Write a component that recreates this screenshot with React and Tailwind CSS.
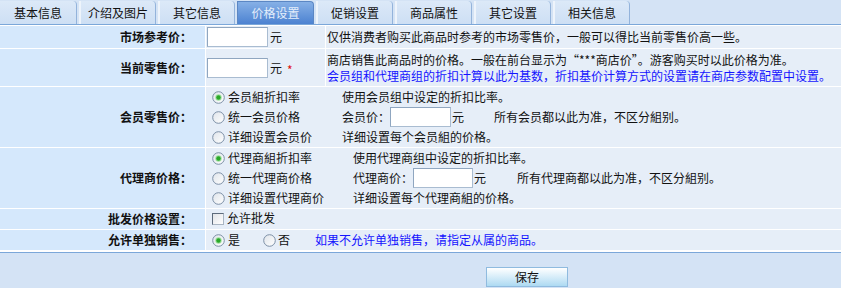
import React, { useState } from "react";

const tabs = ["基本信息", "介绍及图片", "其它信息", "价格设置", "促销设置", "商品属性", "其它设置", "相关信息"];

function Radio({ checked }) {
    return (
        <svg width="13" height="13" viewBox="0 0 13 13" className="shrink-0">
            <defs>
                <linearGradient id="rg" x1="0" y1="0" x2="1" y2="1">
                    <stop offset="0" stopColor="#dfe4ea" />
                    <stop offset="1" stopColor="#ffffff" />
                </linearGradient>
            </defs>
            <circle cx="6.5" cy="6.5" r="5.8" fill="url(#rg)" stroke="#7c8fa6" strokeWidth="1" />
            {checked && <circle cx="6.5" cy="6.5" r="3.2" fill="#9fe09f" />}
            {checked && <circle cx="6.5" cy="6.5" r="2.2" fill="#2aa82a" />}
        </svg>
    );
}

function Checkbox() {
    return (
        <div className="w-[12px] h-[12px] shrink-0 border border-t-[#5d6b7c] border-l-[#5d6b7c] border-r-[#a9b5c3] border-b-[#a9b5c3] bg-gradient-to-br from-[#e1e4e8] to-white" />
    );
}

function Input({ w = "w-[61px]" }) {
    return (
        <div className={`${w} h-[20px] bg-white border border-[#a9bcd1] border-t-[#8fa6c0] border-l-[#8fa6c0]`} />
    );
}

function Label({ children, h }) {
    return (
        <div className={`${h} bg-[#d5e8fc] flex items-center justify-end pr-[13px] font-bold text-[#111]`}>
            {children}
        </div>
    );
}

export default function App() {
    const [activeTab] = useState("价格设置");

    return (
        <div className="w-[848px] h-[288px] bg-white text-[12px] leading-none text-[#111] font-['Noto_Sans_CJK_SC','Noto_Sans',sans-serif] overflow-hidden">
            <div className="w-[841px]">
                {/* Tabs */}
                <div className="h-[25px] bg-[#d4e3f5] border-b border-[#7ba7d9] flex items-end">
                    {tabs.map((t, i) => (
                        <div
                            key={t}
                            className={
                                t === activeTab
                                    ? "w-[77px] h-[23px] mr-[2px] flex items-center justify-center rounded-tr-[4px] border border-[#5b87c4] border-b-0 bg-gradient-to-b from-[#86b0e6] to-[#4c82d1] text-[#e4eefb]"
                                    : `w-[77px] h-[23px] mr-[2px] flex items-center justify-center rounded-tr-[4px] border-r border-[#93b3db] ${i > 0 ? "border-l-2 border-l-[#eef4fb]" : ""} bg-gradient-to-b from-[#dce9f8] to-[#cddff4]`
                            }
                        >
                            {t}
                        </div>
                    ))}
                </div>

                {/* Form table */}
                <div className="bg-white pt-px grid grid-cols-[205px_119px_1fr] gap-px">
                    {/* 市场参考价 */}
                    <Label h="h-[22px]">市场参考价：</Label>
                    <div className="bg-[#e6eef8] flex items-center pl-px gap-[2px]">
                        <Input />
                        <span>元</span>
                    </div>
                    <div className="bg-[#e6eef8] flex items-center pl-px">
                        仅供消费者购买此商品时参考的市场零售价，一般可以得比当前零售价高一些。
                    </div>

                    {/* 当前零售价 */}
                    <Label h="h-[37px]">当前零售价：</Label>
                    <div className="bg-[#e6eef8] flex items-center pl-px gap-[2px]">
                        <Input />
                        <span>元</span>
                        <span className="text-[#e01010] ml-[3px] mt-[5px]">*</span>
                    </div>
                    <div className="bg-[#e6eef8] flex flex-col justify-center pl-px gap-[4px]">
                        <span>商店销售此商品时的价格。一般在前台显示为“***商店价”。游客购买时以此价格为准。</span>
                        <span className="text-[#1414ff]">会员组和代理商组的折扣计算以此为基数，折扣基价计算方式的设置请在商店参数配置中设置。</span>
                    </div>

                    {/* 会员零售价 */}
                    <Label h="h-[60px]">会员零售价：</Label>
                    <div className="col-span-2 bg-[#e6eef8] grid grid-cols-[136px_1fr] grid-rows-3">
                        <div className="flex items-center gap-[3px] pl-[6px]"><Radio checked /><span>会员組折扣率</span></div>
                        <div className="flex items-center">使用会员组中设定的折扣比率。</div>
                        <div className="flex items-center gap-[3px] pl-[6px]"><Radio /><span>统一会员价格</span></div>
                        <div className="flex items-center">
                            <span>会员价：</span>
                            <Input w="w-[61px]" />
                            <span className="ml-[1px]">元</span>
                            <span className="ml-[30px]">所有会员都以此为准，不区分組别。</span>
                        </div>
                        <div className="flex items-center gap-[3px] pl-[6px]"><Radio /><span>详细设置会员价</span></div>
                        <div className="flex items-center">详细设置每个会员組的价格。</div>
                    </div>

                    {/* 代理商价格 */}
                    <Label h="h-[60px]">代理商价格：</Label>
                    <div className="col-span-2 bg-[#e6eef8] grid grid-cols-[147px_1fr] grid-rows-3">
                        <div className="flex items-center gap-[3px] pl-[6px]"><Radio checked /><span>代理商組折扣率</span></div>
                        <div className="flex items-center">使用代理商组中设定的折扣比率。</div>
                        <div className="flex items-center gap-[3px] pl-[6px]"><Radio /><span>统一代理商价格</span></div>
                        <div className="flex items-center">
                            <span>代理商价：</span>
                            <Input w="w-[60px]" />
                            <span className="ml-[1px]">元</span>
                            <span className="ml-[31px]">所有代理商都以此为准，不区分組别。</span>
                        </div>
                        <div className="flex items-center gap-[3px] pl-[6px]"><Radio /><span>详细设置代理商价</span></div>
                        <div className="flex items-center">详细设置每个代理商組的价格。</div>
                    </div>

                    {/* 批发价格设置 */}
                    <Label h="h-[20px]">批发价格设置：</Label>
                    <div className="col-span-2 bg-[#e6eef8] flex items-center pl-[6px] gap-[3px]">
                        <Checkbox />
                        <span className="-mt-[3px]">允许批发</span>
                    </div>

                    {/* 允许单独销售 */}
                    <Label h="h-[20px]">允许单独销售：</Label>
                    <div className="col-span-2 bg-[#e6eef8] flex items-center pl-[6px]">
                        <Radio checked />
                        <span className="ml-[3px]">是</span>
                        <span className="ml-[23px]"><Radio /></span>
                        <span className="ml-[2px]">否</span>
                        <span className="ml-[25px] text-[#1414ff]">如果不允许单独销售，请指定从属的商品。</span>
                    </div>
                </div>

                {/* Footer */}
                <div className="mt-[2px] h-[36px] border-t border-[#7ba7d9] bg-[#d4e3f5] pt-[14px] pl-[486px]">
                    <button className="w-[82px] h-[20px] border border-[#8fbbdf] bg-gradient-to-b from-white to-[#addaf2] flex items-center justify-center text-[12px] text-[#111]">
                        保存
                    </button>
                </div>
            </div>
        </div>
    );
}
